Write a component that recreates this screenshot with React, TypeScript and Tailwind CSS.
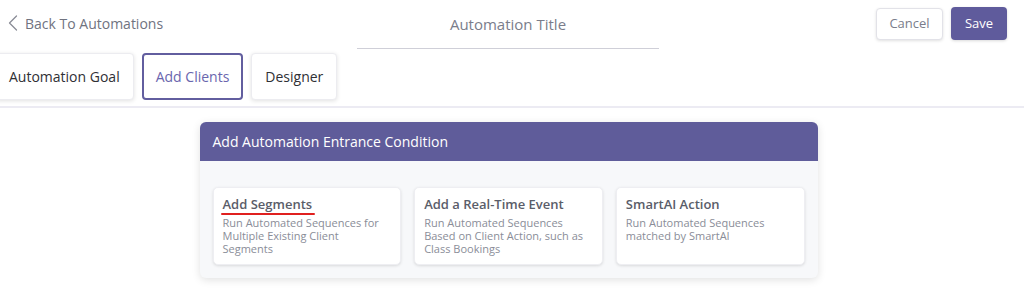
import React from 'react';
import { ChevronLeft } from 'lucide-react';

const options = [
  {
    title: 'Add Segments',
    desc: 'Run Automated Sequences for Multiple Existing Client Segments',
    marked: true,
  },
  {
    title: 'Add a Real-Time Event',
    desc: 'Run Automated Sequences Based on Client Action, such as Class Bookings',
  },
  {
    title: 'SmartAI Action',
    desc: 'Run Automated Sequences matched by SmartAI',
  },
];

const tabs = ['Automation Goal', 'Add Clients', 'Designer'];

export default function App() {
  return (
    <div
      className="w-[1024px] h-[300px] bg-white overflow-hidden"
      style={{ fontFamily: '"Open Sans", "Liberation Sans", sans-serif' }}
    >
      {/* Top bar */}
      <div className="h-[46px] flex items-center relative">
        <button className="flex items-center pl-0 text-[#70737f] text-[14px] gap-0">
          <ChevronLeft size={28} strokeWidth={1.1} className="text-[#8a8c96] -ml-[1px] -mr-[2px]" />
          <span>Back To Automations</span>
        </button>
        <div className="absolute left-[357px] top-[0px] w-[302px] h-[49px] border-b border-[#cfcfd8] flex items-center justify-center">
          <span className="text-[#7a7d8b] text-[15px]">Automation Title</span>
        </div>
        <div className="ml-auto flex items-center gap-[8px] pr-[17px] pt-[1px]">
          <button className="h-[32px] w-[67px] rounded-[4px] border border-[#e2e2e8] bg-white text-[#7a7d8b] text-[13px] shadow-[0_1px_3px_rgba(0,0,0,0.12)]">
            Cancel
          </button>
          <button className="h-[33px] w-[56px] rounded-[4px] bg-[#5f5b9c] text-white text-[13px] shadow-[0_1px_3px_rgba(0,0,0,0.15)]">
            Save
          </button>
        </div>
      </div>

      {/* Tabs */}
      <div className="flex gap-[8px] mt-[7px] -ml-[5px]">
        {tabs.map((t) => {
          const active = t === 'Add Clients';
          return (
            <div
              key={t}
              className={
                active
                  ? 'h-[47px] px-[12px] flex items-center rounded-[4px] border-2 border-[#625e9f] text-[#6a66ae] text-[14px] bg-white'
                  : 'h-[47px] px-[13px] flex items-center rounded-[4px] border border-[#ececf0] text-[#2f3035] text-[14px] bg-white shadow-[0_1px_4px_rgba(0,0,0,0.12)]'
              }
            >
              {t}
            </div>
          );
        })}
      </div>
      <div className="mt-[6px] h-[2px] bg-[#ecebf3]" />

      {/* Entrance condition card */}
      <div className="flex justify-center mt-[14px] pr-[7px]">
        <div className="w-[618px] rounded-[6px] overflow-hidden bg-[#f7f8fa] shadow-[0_2px_8px_rgba(0,0,0,0.12)]">
          <div className="h-[39px] bg-[#5f5c9a] flex items-center px-[13px] text-white text-[14px]">
            Add Automation Entrance Condition
          </div>
          <div className="grid grid-cols-3 gap-[13px] px-[13px] pt-[26px] pb-[13px]">
            {options.map((o) => (
              <div
                key={o.title}
                className="h-[78px] bg-white rounded-[5px] border border-[#eeeef2] shadow-[0_1px_3px_rgba(0,0,0,0.12)] px-[9px] pt-[3px]"
              >
                <div className="relative inline-block text-[13px] font-semibold text-[#5a5d69] leading-[18px]">
                  {o.title}
                  {o.marked && (
                    <span className="absolute left-[-2px] right-[-3px] bottom-[-2px] h-[2px] bg-[#e0201f] rounded-full" />
                  )}
                </div>
                <p className="text-[11px] leading-[13px] text-[#8a8d98] mt-[1px]">{o.desc}</p>
              </div>
            ))}
          </div>
        </div>
      </div>
    </div>
  );
}
